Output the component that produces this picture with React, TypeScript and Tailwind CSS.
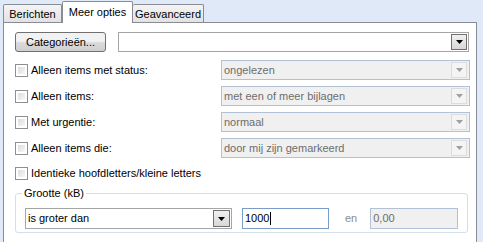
import React from "react";

function Arrow({ disabled = false }: { disabled?: boolean }) {
  return (
    <svg width="7" height="4" viewBox="0 0 7 4">
      <path d="M0 0h7L3.5 4z" fill={disabled ? "#a0a0a0" : "#000"} />
    </svg>
  );
}

function CheckBox() {
  return (
    <span className="h-[13px] w-[13px] shrink-0 border border-[#8f8f8f] bg-white p-[2px]">
      <span className="block h-full w-full bg-[linear-gradient(135deg,#dcdcdc,#f7f7f7)]" />
    </span>
  );
}

function DisabledCombo({ value }: { value: string }) {
  return (
    <div className="flex h-[20px] w-[249px] items-center border border-[#b2c1d6] bg-[#f0f0f0] pl-[2px] pr-[2px]">
      <span className="flex-1 text-[#6d6d6d]">{value}</span>
      <span className="flex h-[16px] w-[16px] items-center justify-center border border-[#dcdcdc] bg-[#f4f4f4]">
        <Arrow disabled />
      </span>
    </div>
  );
}

function OptionRow({ label, value }: { label: string; value: string }) {
  return (
    <div className="flex h-[20px] items-center">
      <div className="flex w-[206px] items-center gap-[3px]">
        <CheckBox />
        <span>{label}</span>
      </div>
      <DisabledCombo value={value} />
    </div>
  );
}

const rows = [
  { label: "Alleen items met status:", value: "ongelezen" },
  { label: "Alleen items:", value: "met een of meer bijlagen" },
  { label: "Met urgentie:", value: "normaal" },
  { label: "Alleen items die:", value: "door mij zijn gemarkeerd" },
];

export default function App() {
  return (
    <div className="h-[242px] w-[483px] overflow-hidden bg-[#dfe9f7] pl-[3px] pt-[1px] font-['Liberation_Sans',Arial,sans-serif] text-[11px] leading-[13px] text-black">
      <div className="flex h-[21px] items-end">
        <div className="flex h-[18px] w-[59px] items-center justify-center rounded-t-[2px] border border-b-0 border-[#898c95] bg-[linear-gradient(#f4f4f4,#e2e2e2)] pt-[1px]">
          Berichten
        </div>
        <div className="relative z-10 -mb-px flex h-[22px] w-[71px] items-start justify-center rounded-t-[2px] border border-b-0 border-[#898c95] bg-white pt-[4px]">
          Meer opties
        </div>
        <div className="flex h-[18px] w-[71px] items-center justify-center rounded-t-[2px] border border-b-0 border-l-0 border-[#898c95] bg-[linear-gradient(#f4f4f4,#e2e2e2)] pt-[1px]">
          Geavanceerd
        </div>
      </div>
      <div className="h-[230px] w-[474px] border border-[#898c95] bg-white pl-[11px] pt-[9px]">
        <div className="flex h-[20px] items-center">
          <button className="flex h-[20px] w-[91px] items-center justify-center rounded-[3px] border border-[#707070] bg-[linear-gradient(#f2f2f2_45%,#dadada_55%,#cfcfcf)] text-black">
            Categorieën...
          </button>
          <div className="ml-[12px] flex h-[20px] w-[351px] items-center justify-end border border-[#a5a5a5] bg-white pr-[1px]">
            <span className="flex h-[16px] w-[16px] items-center justify-center border border-[#707070] bg-[linear-gradient(#f0f0f0,#d8d8d8)]">
              <Arrow />
            </span>
          </div>
        </div>
        <div className="mt-[8px] flex flex-col gap-[6px]">
          {rows.map((r) => (
            <OptionRow key={r.label} label={r.label} value={r.value} />
          ))}
        </div>
        <div className="mt-[8px] flex h-[14px] items-center gap-[3px]">
          <CheckBox />
          <span>Identieke hoofdletters/kleine letters</span>
        </div>
        <div className="mt-[13px] w-[453px] rounded-[3px] border border-[#d5dfe5] pb-[3px] pl-[9px]">
          <div className="-mt-[7px] mb-[8px] -ml-[3px] w-fit bg-white px-[2px]">Grootte (kB)</div>
          <div className="flex h-[21px] items-center">
            <div className="flex h-[21px] w-[207px] items-center border border-[#a5a5a5] bg-white pl-[2px] pr-[1px]">
              <span className="flex-1">is groter dan</span>
              <span className="flex h-[17px] w-[17px] items-center justify-center border border-[#707070] bg-[linear-gradient(#f0f0f0,#d8d8d8)]">
                <Arrow />
              </span>
            </div>
            <div className="ml-[10px] flex h-[21px] w-[87px] items-center border border-[#7a9cc8] bg-white pl-[2px]">
              <span>1000</span>
              <span className="ml-px h-[13px] w-px bg-black" />
            </div>
            <span className="ml-[16px] text-[#8a8a8a]">en</span>
            <div className="ml-[13px] flex h-[21px] w-[88px] items-center border border-[#b2c1d6] bg-[#f0f0f0] pl-[2px] text-[#6d6d6d]">
              0,00
            </div>
          </div>
        </div>
      </div>
    </div>
  );
}
